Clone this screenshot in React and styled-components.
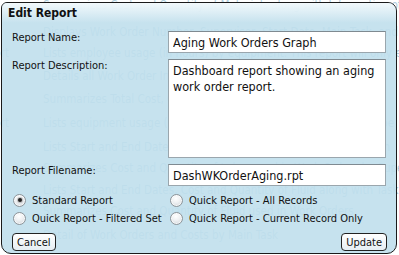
import { useState } from "react";
import styled, { createGlobalStyle } from "styled-components";

const GlobalStyle = createGlobalStyle`
  html, body {
    margin: 0;
    padding: 0;
    background: #ffffff;
  }
  body {
    font-family: "DejaVu Sans Condensed", "DejaVu Sans", Verdana, sans-serif;
  }
`;

const reports = [
  { type: "", text: "Summarizes Cost and Quantity of Materials along with Information of Contractor used in Work Orders", h: 27 },
  { type: "", text: "Displays Work Order Number, Supervisor, Start Date, Main Task, and Status", h: 21 },
  { type: "Report", text: "Lists employee usage (in hours) by equipment. This report will only e", h: 23 },
  { type: "", text: "Details all Work Order Information for the selected date range", h: 23 },
  { type: "", text: "Summarizes Total Cost, Quantity and Hours by Work Order", h: 24 },
  { type: "Report", text: "Lists equipment usage (in hours) by Work Order and Main Task type", h: 24 },
  { type: "", text: "Lists Start and End Dates along with Cost of Work Orders by Month", h: 21 },
  { type: "", text: "Summarizes Cost and Quantity of Labor used in Work Orders by Supervisor", h: 22 },
  { type: "", text: "Lists Start and End Dates, Cost and Quantity of Fluid along with Task", h: 21 },
  { type: "", text: "Summarizes Cost and Quantity of Fluid used in Work Orders", h: 24 },
  { type: "", text: "Detail of Work Orders and Costs by Main Task", h: 22 },
];

const options = [
  { id: "standard", label: "Standard Report" },
  { id: "all", label: "Quick Report - All Records" },
  { id: "filtered", label: "Quick Report - Filtered Set" },
  { id: "current", label: "Quick Report - Current Record Only" },
];

export default function App() {
  const [name, setName] = useState("Aging Work Orders Graph");
  const [description, setDescription] = useState(
    "Dashboard report showing an aging work order report."
  );
  const [filename, setFilename] = useState("DashWKOrderAging.rpt");
  const [kind, setKind] = useState("standard");

  return (
    <Page>
      <GlobalStyle />
      <ReportList>
        {reports.map((r, i) => (
          <ReportRow key={i} $h={r.h}>
            <TypeCell>{r.type}</TypeCell>
            <DescCell>{r.text}</DescCell>
          </ReportRow>
        ))}
      </ReportList>

      <Dialog>
        <TitleBar>Edit Report</TitleBar>
        <Body>
          <FieldRow>
            <Label>Report Name:</Label>
            <TextBox value={name} onChange={(e) => setName(e.target.value)} />
          </FieldRow>
          <FieldRow>
            <Label>Report Description:</Label>
            <TextArea
              value={description}
              onChange={(e) => setDescription(e.target.value)}
            />
          </FieldRow>
          <FieldRow>
            <Label>Report Filename:</Label>
            <TextBox
              value={filename}
              onChange={(e) => setFilename(e.target.value)}
            />
          </FieldRow>

          <RadioGrid>
            {options.map((o) => (
              <RadioLabel key={o.id}>
                <Radio
                  type="radio"
                  name="kind"
                  checked={kind === o.id}
                  onChange={() => setKind(o.id)}
                />
                {o.label}
              </RadioLabel>
            ))}
          </RadioGrid>

          <ButtonBar>
            <Button>Cancel</Button>
            <Button>Update</Button>
          </ButtonBar>
        </Body>
      </Dialog>
    </Page>
  );
}

const Page = styled.div`
  position: relative;
  width: 399px;
  height: 255px;
  overflow: hidden;
  background: #ffffff;
`;

const ReportList = styled.div`
  display: flex;
  flex-direction: column;
  margin-top: -2px;
`;

const ReportRow = styled.div`
  display: flex;
  align-items: flex-start;
  height: ${(p) => p.$h}px;
  font-size: 11.5px;
  line-height: 14px;
  color: #adcddd;
  white-space: nowrap;
`;

const TypeCell = styled.div`
  width: 9px;
  margin-right: 34px;
  overflow: hidden;
  direction: rtl;
`;

const DescCell = styled.div`
  flex: 1;
  overflow: hidden;
`;

const Dialog = styled.div`
  position: absolute;
  left: 1px;
  top: 2px;
  width: 396px;
  height: 252px;
  box-sizing: border-box;
  border: 1px solid #1a1a1a;
  border-radius: 6px 9px 10px 10px;
  background: rgba(192, 223, 236, 0.9);
  display: flex;
  flex-direction: column;
  overflow: hidden;
`;

const TitleBar = styled.div`
  height: 20px;
  padding-left: 6px;
  display: flex;
  align-items: center;
  font-size: 12px;
  font-weight: bold;
  color: #111;
  background: linear-gradient(
    to bottom,
    rgba(246, 251, 253, 0.92),
    rgba(196, 224, 236, 0.15)
  );
`;

const Body = styled.div`
  display: flex;
  flex-direction: column;
  padding: 8px 9px 0 10px;
  gap: 6px;
`;

const FieldRow = styled.div`
  display: flex;
  align-items: flex-start;
`;

const Label = styled.div`
  width: 156px;
  font-size: 11px;
  line-height: 13px;
  color: #111;
`;

const TextBox = styled.input`
  width: 218px;
  height: 22px;
  box-sizing: border-box;
  border: 1px solid #9aa6ad;
  border-top-color: #7f8a91;
  padding: 0 4px;
  font-family: inherit;
  font-size: 12.5px;
  color: #111;
  background: #fff;
  outline: none;
`;

const TextArea = styled.textarea`
  width: 218px;
  height: 99px;
  box-sizing: border-box;
  border: 1px solid #9aa6ad;
  border-top-color: #7f8a91;
  padding: 3px 3px 3px 4px;
  font-family: inherit;
  font-size: 12.5px;
  line-height: 16px;
  color: #111;
  background: #fff;
  resize: none;
  outline: none;
  overflow: hidden;
`;

const RadioGrid = styled.div`
  display: grid;
  grid-template-columns: 157px 1fr;
  grid-auto-rows: 18px;
  margin-top: -1px;
`;

const RadioLabel = styled.label`
  display: flex;
  align-items: center;
  gap: 6px;
  font-size: 11px;
  color: #111;
  white-space: nowrap;
`;

const Radio = styled.input`
  appearance: none;
  margin: 0 0 0 1px;
  width: 13px;
  height: 13px;
  border-radius: 50%;
  border: 1px solid #8d9499;
  background: radial-gradient(circle at 45% 30%, #ffffff 0%, #eef0f2 45%, #c9cfd4 100%);
  box-shadow: inset 0 0 0 1px rgba(255, 255, 255, 0.7);
  box-sizing: border-box;
  display: grid;
  place-items: center;

  &:checked::after {
    content: "";
    width: 4px;
    height: 4px;
    border-radius: 50%;
    background: #222;
    box-shadow: 0 0 1px 1px rgba(80, 80, 80, 0.35);
  }
`;

const ButtonBar = styled.div`
  display: flex;
  justify-content: space-between;
`;

const Button = styled.button`
  height: 18px;
  padding: 0 4px;
  border: 1px solid #222;
  border-radius: 4px;
  font-family: inherit;
  font-size: 11px;
  color: #111;
  background: linear-gradient(to bottom, #ffffff, #e6eef3);
  cursor: pointer;
`;
